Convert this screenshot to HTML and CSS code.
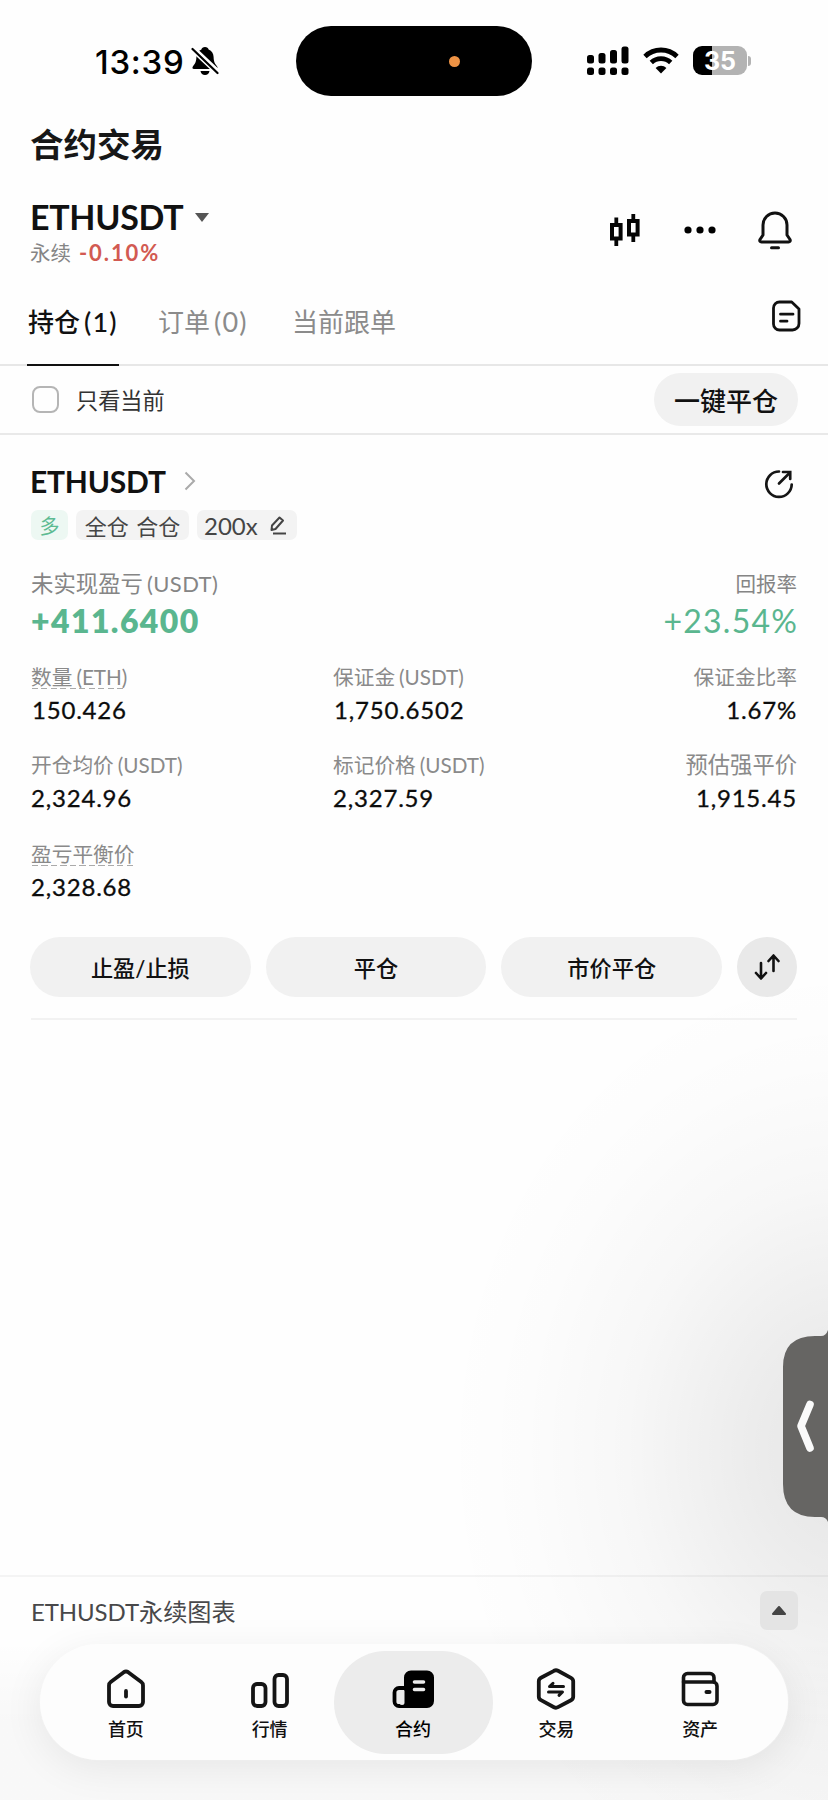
FILE: index.html
```html
<!DOCTYPE html>
<html lang="zh-CN">
<head>
<meta charset="utf-8">
<title>合约交易</title>
<link rel="stylesheet" href="styles.css">
</head>
<body>
<div class="screen">
  <header class="status">
    <div class="clock">13:39</div>
    <svg class="mute" width="28" height="30" viewBox="0 0 28 30">
      <path d="M14 1c-2 0-3.300 1.200-3.600 2.500C7 4.800 5.600 7.600 5.400 11c-.2 4-.7 6-3.400 9.200-1 1.400-.6 2.800 1 2.800h22c1.600 0 2-1.400 1-2.800-2.700-3.200-3.200-5.200-3.400-9.200-.2-3.400-1.600-6.200-5-7.500C17.300 2.200 16 1 14 1z"/>
      <path d="M9.500 25h9c-.5 2.500-2 4-4.500 4s-4-1.500-4.500-4z"/>
      <path d="M0 1 28 27.500" stroke="#fff" stroke-width="6"/>
      <path d="M1.500 3 26.500 27" stroke="#000" stroke-width="2.200" stroke-linecap="round"/>
    </svg>
    <div class="island"><i></i></div>
    <svg class="signal" width="42" height="29" viewBox="0 0 42 29">
      <rect x="0" y="9" width="7" height="8.500" rx="2.500"/><rect x="11.500" y="7" width="7" height="10.500" rx="2.500"/><rect x="23" y="4" width="7" height="13.500" rx="2.500"/><rect x="34.500" y="0.500" width="7" height="17" rx="2.500"/>
      <rect x="0" y="21.500" width="7" height="7.500" rx="2.500"/><rect x="11.500" y="21.500" width="7" height="7.500" rx="2.500"/><rect x="23" y="21.500" width="7" height="7.500" rx="2.500"/><rect x="34.500" y="21.500" width="7" height="7.500" rx="2.500"/>
    </svg>
    <svg class="wifi" width="36" height="27" viewBox="0 0 36 27">
      <path d="M2 9.500a23 23 0 0 1 32 0M8.300 15.500a14 14 0 0 1 19.400 0" fill="none" stroke="#000" stroke-width="4.800"/>
      <path d="M18 26.500 12.600 21a7.800 7.800 0 0 1 10.800 0z"/>
    </svg>
    <div class="battery"><span>35</span></div>
    <div class="battery-cap"></div>
  </header>

  <h1 class="title">合约交易</h1>

  <section class="pair">
    <div class="pair-info">
      <div class="pair-name">ETHUSDT<svg width="14" height="9" viewBox="0 0 14 9"><path d="M0 0h14L7 9z" fill="#555"/></svg></div>
      <div class="pair-sub">永续<b>-0.10%</b></div>
    </div>
    <div class="pair-icons">
      <svg width="30" height="32" viewBox="0 0 30 32" fill="none" stroke="#050505">
        <path d="M6.300 3.500v6M6.300 26v6M23.300 0v6M23.300 22v6" stroke-width="3.800"/>
        <rect x="2" y="11" width="8.600" height="13.500" stroke-width="4"/>
        <rect x="19" y="7" width="8.600" height="13.500" stroke-width="4"/>
      </svg>
      <svg class="dots" width="32" height="8" viewBox="0 0 32 8"><circle cx="4" cy="4" r="3.600"/><circle cx="16" cy="4" r="3.600"/><circle cx="28" cy="4" r="3.600"/></svg>
      <svg width="34" height="39" viewBox="0 0 34 39" fill="none" stroke="#111" stroke-width="3" stroke-linecap="round" stroke-linejoin="round">
        <path d="M5 24V14a12 12 0 0 1 24 0v10l3 4.500c.7 1.500 0 2.500-1.500 2.500h-27C2 31 1.300 30 2 28.500z"/><path d="M13.500 36.700h7"/>
      </svg>
    </div>
  </section>

  <nav class="tabs">
    <a class="tab active">持仓<span>(1)</span></a>
    <a class="tab second">订单<span>(0)</span></a>
    <a class="tab third">当前跟单</a>
    <svg class="tabs-doc" width="29" height="32" viewBox="0 0 29 32" fill="none" stroke="#111" stroke-width="2.800" stroke-linecap="round" stroke-linejoin="round">
      <path d="M7.500 2h12.200l7.300 7v14.500a6.500 6.500 0 0 1-6.500 6.500h-13A6 6 0 0 1 1.500 24V8a6 6 0 0 1 6-6z"/><path d="M8.500 14.200h12.500M8.500 21.200h6.500"/>
    </svg>
  </nav>

  <section class="filter">
    <i class="check"></i><span class="filter-text">只看当前</span>
    <button class="close-all">一键平仓</button>
  </section>

  <main class="position">
    <div class="pos-head">
      <h2>ETHUSDT</h2>
      <svg class="chev" width="12" height="20" viewBox="0 0 12 20"><path d="M1.500 1.500 10 10l-8.500 8.500" fill="none" stroke="#aaa" stroke-width="2"/></svg>
      <svg class="share" width="30" height="30" viewBox="0 0 30 30" fill="none" stroke="#151515" stroke-width="2.700" stroke-linecap="round">
        <path d="M15 2.500A12.700 12.700 0 1 0 27.700 15.500"/><path d="M15 14.500 25.500 4"/><path d="M19 3h7.200v7" stroke-linejoin="miter"/>
      </svg>
    </div>
    <div class="tags">
      <span class="tag long">多</span>
      <span class="tag mode">全仓 合仓</span>
      <span class="tag lev"><em>200x</em><svg width="17" height="19" viewBox="0 0 17 19" fill="none" stroke="#444" stroke-width="2" stroke-linejoin="round"><path d="M2 9.500 9.500 1.500l3.500 3-7.500 8.500-4 1z"/><path d="M3 17.500h13"/></svg></span>
    </div>
    <div class="pnl">
      <div><div class="pnl-label">未实现盈亏<span>(USDT)</span></div><div class="pnl-value strong">+411.6400</div></div>
      <div class="right"><div class="pnl-label small">回报率</div><div class="pnl-value">+23.54%</div></div>
    </div>
    <div class="grid">
      <div class="cell"><div class="label"><u>数量<span>(ETH)</span></u></div><div class="value one">150.426</div></div>
      <div class="cell"><div class="label">保证金<span>(USDT)</span></div><div class="value one">1,750.6502</div></div>
      <div class="cell right"><div class="label">保证金比率</div><div class="value">1.67%</div></div>
      <div class="cell"><div class="label">开仓均价<span>(USDT)</span></div><div class="value">2,324.96</div></div>
      <div class="cell"><div class="label">标记价格<span>(USDT)</span></div><div class="value">2,327.59</div></div>
      <div class="cell right"><div class="label wide">预估强平价</div><div class="value">1,915.45</div></div>
      <div class="cell"><div class="label"><u>盈亏平衡价</u></div><div class="value">2,328.68</div></div>
    </div>
    <div class="actions">
      <button>止盈/止损</button><button>平仓</button><button>市价平仓</button>
      <button class="swap"><svg width="26" height="28" viewBox="0 0 26 28" fill="none" stroke="#111" stroke-width="2.600" stroke-linecap="round" stroke-linejoin="round"><path d="M7 10v15M2 20l5 5.500 5-5.500M19.500 18V3M14.500 8l5-5.500 5 5.500"/></svg></button>
    </div>
  </main>

  <section class="chart-bar">
    <div><span>ETHUSDT</span>永续图表</div>
    <button><svg width="14" height="9" viewBox="0 0 14 9"><path d="M7 1 13 8H1z" fill="#444" stroke="#444" stroke-linejoin="round" stroke-width="2"/></svg></button>
  </section>

  <footer class="dock">
    <a class="item"><svg width="40" height="42" viewBox="0 0 40 42" fill="none" stroke="#151515" stroke-width="3.800" stroke-linecap="round" stroke-linejoin="round"><path d="M3 17.500c0-1.500.5-2.500 1.700-3.400L17.800 4.200c1.500-1 2.900-1 4.400 0l13.100 9.900c1.200.9 1.700 1.900 1.700 3.400V34a4 4 0 0 1-4 4H7a4 4 0 0 1-4-4z"/><path d="M20 23v5.500"/></svg>首页</a>
    <a class="item"><svg width="40" height="42" viewBox="0 0 40 42" fill="none" stroke="#151515" stroke-width="3.800"><rect x="3" y="16" width="12.500" height="22" rx="4"/><rect x="24.500" y="7" width="12.500" height="31" rx="4"/></svg>行情</a>
    <a class="item current"><svg width="44" height="42" viewBox="0 0 44 42"><path d="M20 2.500h16a7 7 0 0 1 7 7V33a7 7 0 0 1-7 7H13V9.500a7 7 0 0 1 7-7z"/><path d="M13 20H8a4.500 4.500 0 0 0-4.500 4.500v9A4.500 4.500 0 0 0 8 38h6" fill="none" stroke="#000" stroke-width="3.800"/><path d="M9 22.500h4.500v12a2.500 2.500 0 0 1-5 0v-11z" fill="#ececec"/><path d="M23.500 14h9M23.500 21.500h9" stroke="#ececec" stroke-width="3.600" stroke-linecap="round"/></svg>合约</a>
    <a class="item"><svg width="40" height="42" viewBox="0 0 40 42" fill="none" stroke="#151515" stroke-width="3.800" stroke-linejoin="round" stroke-linecap="round"><path d="M18 2.800c1.500-.8 2.500-.8 4 0l13 7c1.500.8 2.200 2 2.200 3.500v15.400c0 1.500-.7 2.700-2.200 3.500l-13 7c-1.500.8-2.500.8-4 0l-13-7c-1.500-.8-2.200-2-2.200-3.500V13.300c0-1.500.7-2.700 2.200-3.500z"/><path d="M27.500 18.500h-14l3.500-3.200M12.500 24h14L23 27.300" stroke-width="3"/></svg>交易</a>
    <a class="item"><svg width="40" height="42" viewBox="0 0 40 42" fill="none" stroke="#151515" stroke-width="3.600" stroke-linecap="round" stroke-linejoin="round"><path d="M3.500 14V9.500a4 4 0 0 1 4-4H30a4 4 0 0 1 4 4V14"/><path d="M3.500 14h29.500a4 4 0 0 1 4 4v14.500a4 4 0 0 1-4 4H7.500a4 4 0 0 1-4-4z"/><path d="M26.500 24h3" stroke-width="4"/></svg>资产</a>
  </footer>

  <aside class="handle">
    <svg width="45" height="192" viewBox="0 0 45 192"><path d="M0 37Q0 6 32 6h6q5 0 7-6v192q-2-5-7-5h-6Q0 187 0 154z" fill="#666563"/><path d="M27 74.500 18 96l9 22" fill="none" stroke="#fafafa" stroke-width="7.600" stroke-linecap="round" stroke-linejoin="round"/></svg>
  </aside>
</div>
</body>
</html>
```
FILE: styles.css
```css
* { box-sizing: border-box; }
body { margin: 0; background: #fefefe; }
button { border: 0; padding: 0; font: inherit; color: inherit; display: flex; align-items: center; justify-content: center; }
svg { display: block; flex: none; }

.screen {
  position: relative;
  width: 828px;
  height: 1800px;
  overflow: hidden;
  display: flex;
  flex-direction: column;
  font-family: Lato, "Noto Sans CJK SC", sans-serif;
  color: #111;
  background:
    radial-gradient(ellipse 410px 490px at 850px 1450px, rgba(0,0,0,.1) 0%, rgba(0,0,0,.07) 25%, rgba(0,0,0,.028) 55%, rgba(0,0,0,.008) 80%, transparent 100%),
    linear-gradient(180deg, transparent 1640px, rgba(0,0,0,.022) 1720px, rgba(0,0,0,.022)),
    #fefefe;
}

/* Status bar */
.status { height: 112px; padding: 0 0 0 95px; display: flex; align-items: flex-start; flex: none; }
.clock { width: 96px; margin-top: 41px; line-height: 42px; font-family: Inter, sans-serif; font-size: 33px; font-weight: 500; letter-spacing: .7px; color: #000; }
.mute { margin-top: 46px; }
.island { width: 236px; height: 70px; margin: 26px 0 0 77px; border-radius: 35px; background: #000; display: flex; align-items: center; justify-content: flex-end; padding-right: 72px; }
.island i { width: 11px; height: 11px; border-radius: 50%; background: #ee9345; }
.signal { margin: 46px 0 0 55px; }
.wifi { margin: 47px 0 0 14px; }
.battery { width: 54px; height: 29px; margin: 46px 0 0 14px; border-radius: 9px; background: linear-gradient(90deg, #000 35%, #b3b3b3 35%); display: flex; align-items: center; justify-content: center; font-family: Inter, sans-serif; font-size: 25px; font-weight: 700; color: #fff; }
.battery-cap { width: 3px; height: 10px; margin: 56px 0 0 1px; border-radius: 0 5px 5px 0; background: #b3b3b3; }

.title { height: 66px; margin: 0; padding-left: 30px; line-height: 62px; font-size: 33.500px; font-weight: 600; color: #171717; font-family: "Noto Sans CJK SC", sans-serif; }

/* Trading pair */
.pair { height: 102px; padding: 18px 36px 0 30px; display: flex; justify-content: space-between; flex: none; }
.pair-name { display: flex; align-items: center; gap: 12px; line-height: 42px; font-size: 34px; font-weight: 700; letter-spacing: -.3px; }
.pair-sub { display: flex; align-items: center; margin-top: -1px; line-height: 32px; font-size: 20.500px; color: #858585; }
.pair-sub b { margin-left: 8px; font-size: 22px; font-weight: 700; letter-spacing: 1.900px; color: #d25a52; }
.pair-icons { display: flex; align-items: center; height: 68px; }
.pair-icons .dots { margin: 0 42px 0 44px; }

/* Tabs */
.tabs { height: 86px; padding: 0 27px 0 27px; display: flex; align-items: flex-start; border-bottom: 2px solid #e7e7e7; flex: none; }
.tab { height: 86px; line-height: 84px; font-size: 26px; color: #8b8b8b; white-space: nowrap; display: flex; padding-left: 1px; }
.tab span { margin-left: 4px; font-size: 27px; letter-spacing: 1.200px; }
.tab.active { width: 92px; color: #111; border-bottom: 2px solid #111; font-weight: 500; }
.tab.second { width: 92px; margin-left: 38px; }
.tab.third { margin-left: 42px; }
.tabs-doc { margin: 20px 0 0 auto; }

/* Filter */
.filter { height: 69px; padding: 0 30px 0 32px; display: flex; align-items: center; border-bottom: 2px solid #e9e9e9; flex: none; }
.check { width: 27px; height: 27px; border: 2px solid #b5b5b5; border-radius: 8px; }
.filter-text { margin: -2px 0 0 17px; font-size: 22.200px; color: #333; }
.close-all { width: 144px; height: 53px; margin-left: auto; border-radius: 27px; background: #f1f1f1; font-size: 26px; font-weight: 500; }

/* Position card */
.position { margin: 0 31px; height: 585px; border-bottom: 2px solid #f2f2f2; flex: none; }
.pos-head { display: flex; align-items: center; height: 44px; margin-top: 24px; }
.pos-head h2 { margin: 0 0 0 -1px; font-size: 30px; line-height: 44px; font-weight: 700; letter-spacing: -.2px; }
.chev { margin-left: 18px; }
.share { margin: 5px 3px 0 auto; }
.tags { display: flex; gap: 8px; height: 30px; margin-top: 7px; }
.tag { height: 30px; border-radius: 7px; background: #f3f3f3; display: flex; align-items: center; font-size: 21.500px; color: #454545; white-space: pre; }
.tag.long { width: 37px; justify-content: center; background: #edf8f3; color: #5dbb92; font-size: 20px; }
.tag.mode { width: 113px; justify-content: center; font-size: 22px; word-spacing: 2px; }
.tag.lev { width: 100px; padding-left: 7px; }
.lev em { font-style: normal; font-size: 24px; }
.lev svg { margin-left: 12px; }
.pnl { display: flex; justify-content: space-between; margin-top: 28px; height: 88px; }
.right { text-align: right; }
.pnl-label { line-height: 32px; height: 32px; font-size: 22.400px; color: #858585; }
.pnl-label.small { font-size: 20.500px; }
.pnl-label span { margin-left: 4px; font-size: 22px; letter-spacing: .4px; }
.pnl-value { line-height: 42px; font-size: 32px; color: #5ab68f; letter-spacing: 1.200px; }
.pnl-value.strong { font-weight: 800; letter-spacing: 1.400px; }
.right .pnl-value { margin-right: -1px; }
.grid { display: grid; grid-template-columns: 302px 1fr 1fr; grid-auto-rows: 88.400px; margin-top: 1px; }
.label { height: 32px; line-height: 32px; margin-top: 4px; font-size: 20.700px; color: #8a8a8a; white-space: nowrap; }
.label span { margin-left: 4px; font-size: 20.700px; }
.label.wide { font-size: 22.300px; }
.label u { display: inline-block; height: 28px; line-height: 32px; text-decoration: none; background: repeating-linear-gradient(90deg, #aaa 0 6px, transparent 6px 9.500px) 1px 100% / 100% 1px no-repeat; }
.value { line-height: 34px; font-size: 24px; letter-spacing: .8px; color: #0c0c0c; -webkit-text-stroke: .3px #0c0c0c; }
.value.one { padding-left: 1px; }
.actions { display: flex; gap: 15px; margin: 15px 0 0 -1px; }
.actions button { width: 221px; height: 60px; border-radius: 30px; background: #f1f1f1; font-size: 22.200px; font-weight: 500; }
.actions .swap { width: 60px; background: #e9e9e9; }

/* Chart bar */
.chart-bar { height: 68px; margin-top: auto; padding: 0 30px 0 31px; display: flex; align-items: center; justify-content: space-between; border-top: 2px solid rgba(0,0,0,.04); font-size: 24.200px; color: #48484a; flex: none; }
.chart-bar span { font-size: 24px; letter-spacing: -.1px; }
.chart-bar button { width: 38px; height: 39px; border-radius: 7px; background: #e4e4e4; }

/* Dock */
.dock { width: 748px; height: 116px; margin: 1px 0 40px 40px; padding: 7px 16px 6px 14px; border-radius: 58px; background: #fdfdfd; box-shadow: 0 8px 40px rgba(0,0,0,.075), 0 0 2px #fff; display: flex; flex: none; }
.item { flex: 1; display: flex; flex-direction: column; align-items: center; padding-top: 17px; font-size: 18px; line-height: 26px; font-weight: 500; color: #111; }
.item svg { margin-bottom: 6px; }
.item.current { flex: 0 0 159px; margin: 0 -8px; height: 103px; border-radius: 52px; background: #ececec; color: #000; }

/* Edge handle */
.handle { position: absolute; right: 0; top: 1330px; }
```
